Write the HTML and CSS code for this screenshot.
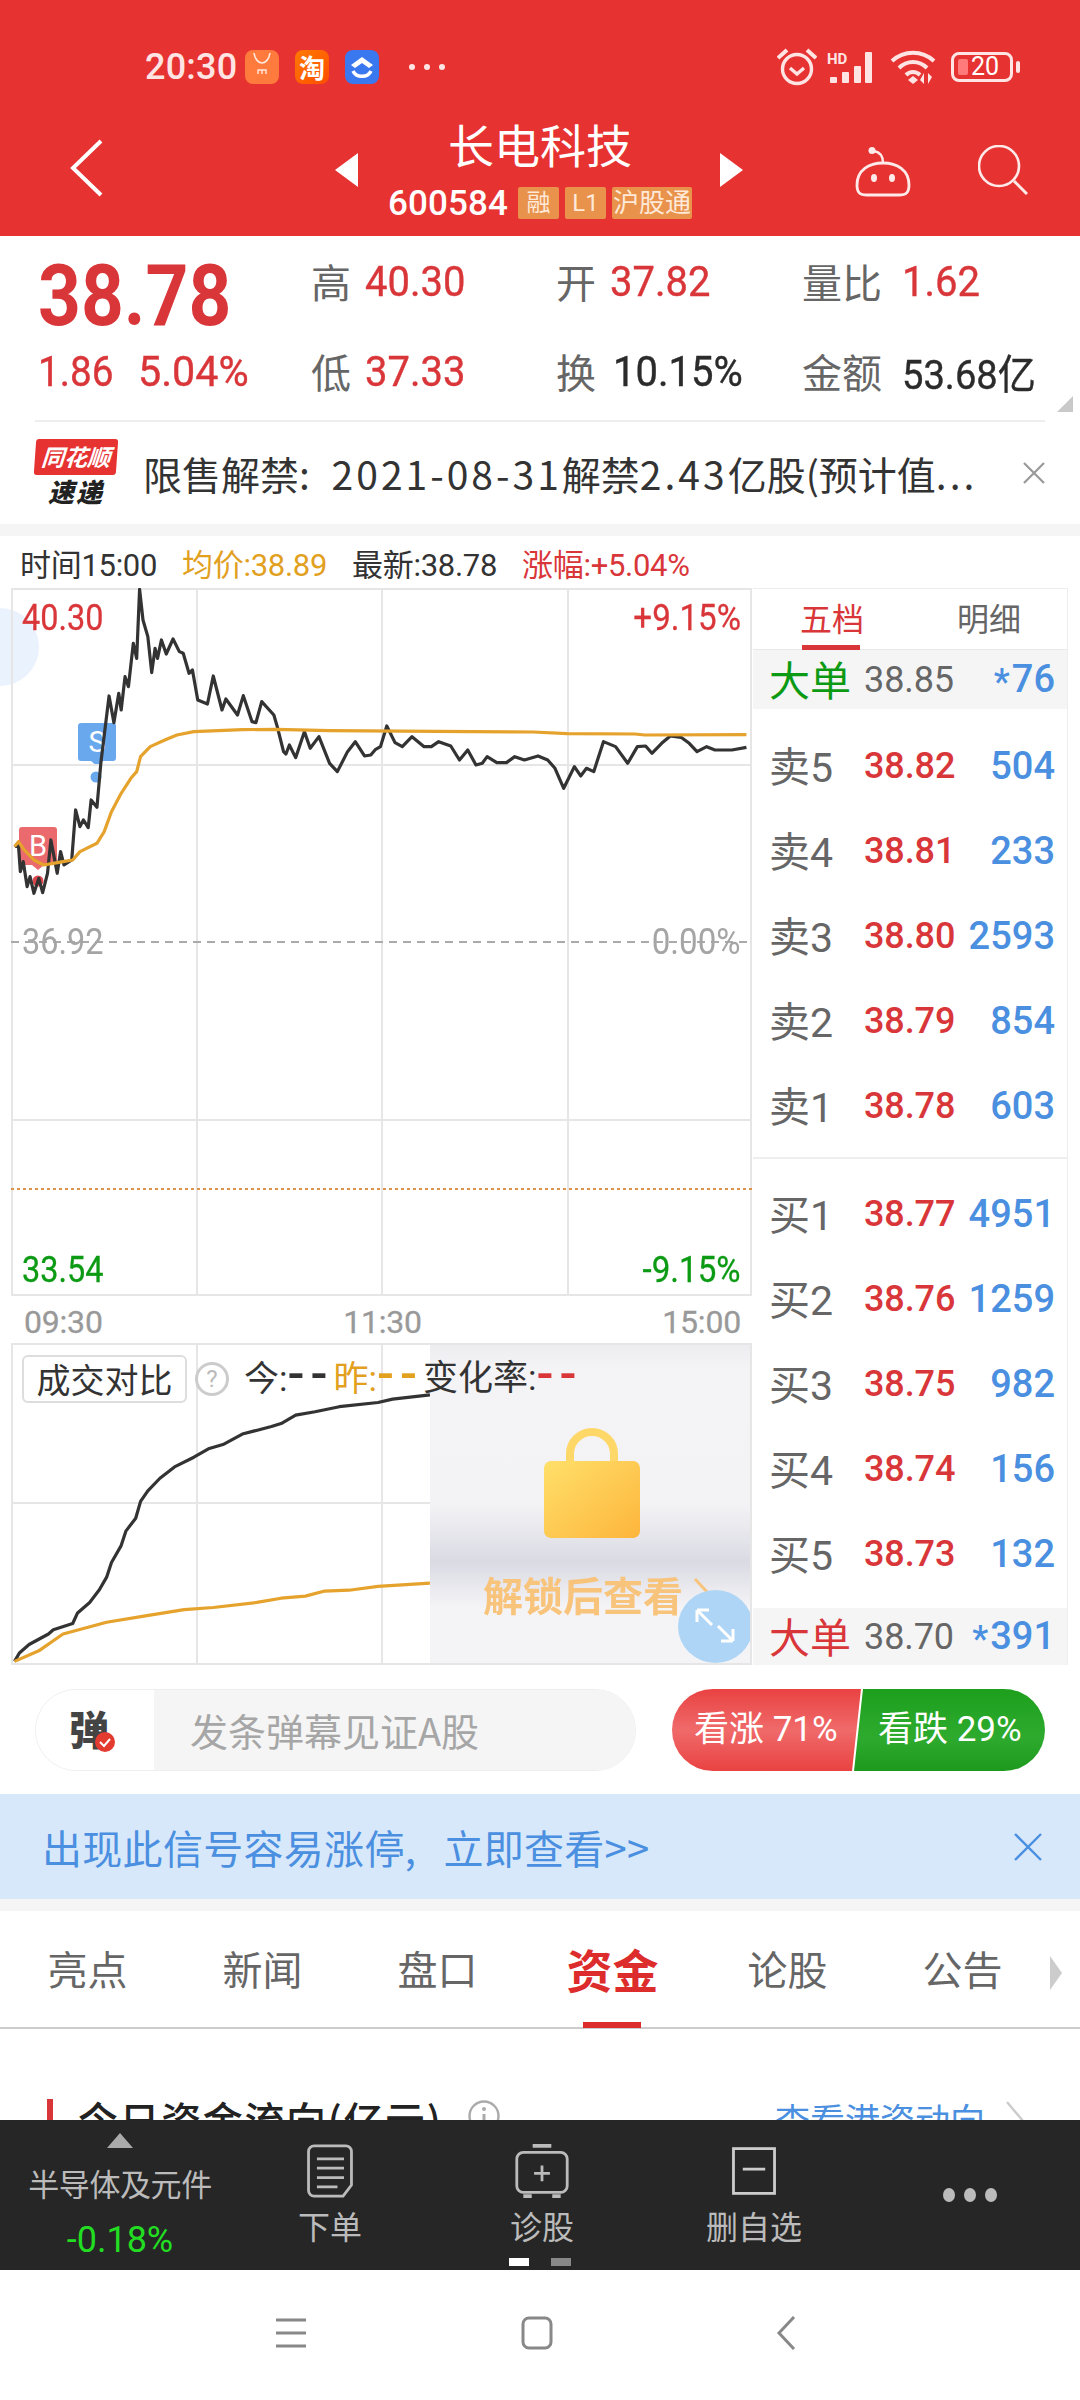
FILE: index.html
```html
<!DOCTYPE html>
<html lang="zh-CN">
<head>
<meta charset="utf-8">
<title>长电科技</title>
<link rel="stylesheet" href="styles.css">
</head>
<body>
<div class="page">
  <header class="hdr">
    <div class="status">
      <span class="time">20:30</span>
      <svg class="app" viewBox="0 0 34 34"><rect width="34" height="34" rx="8" fill="#ff7a3d"/><path d="M9 3c1 7 5 10 8 10s7-3 8-10" fill="none" stroke="#ffe9dc" stroke-width="1.6"/><path d="M13 24v-4h8v4M17 20v4" fill="none" stroke="#ffe9dc" stroke-width="1.4"/></svg>
      <span class="app taobao">淘</span>
      <svg class="app" viewBox="0 0 34 34"><rect width="34" height="34" rx="8" fill="#3a78f0"/><path d="M6 15 17 7l11 8-4 3-7-5-7 5z" fill="#fff"/><path d="M8 21c3 7 15 7 18 0" fill="none" stroke="#fff" stroke-width="3.4"/></svg>
      <span class="more"><i></i><i></i><i></i></span>
      <span class="status-right">
        <svg class="s-alarm" viewBox="0 0 40 38"><circle cx="20" cy="21" r="14.5" fill="none" stroke="#ffe4e4" stroke-width="3.4"/><path d="M13 20l7 6 7-6" fill="none" stroke="#ffe4e4" stroke-width="3.4"/><path d="M1 10 10 2M39 10l-9-8" stroke="#ffe4e4" stroke-width="4"/></svg>
        <span class="signal">
          <svg viewBox="0 0 50 32"><text x="0" y="13" class="hd">HD</text><g fill="#ffe4e4"><rect x="3" y="26" width="7" height="6" rx="1"/><rect x="15" y="21" width="7" height="11" rx="1"/><rect x="27" y="15" width="7" height="17" rx="1"/><rect x="38" y="1" width="7" height="31" rx="1"/></g></svg>
        </span>
        <svg class="s-wifi" viewBox="0 0 46 36"><g fill="none" stroke="#ffe4e4" stroke-width="4"><path d="M2 12c12-11 30-11 42 0"/><path d="M9 19c8-8 20-8 28 0"/><path d="M16 26c4-4 10-4 14 0"/></g><path d="M18 31l5-4 5 4-5 4z" fill="#ffe4e4"/><path d="M34 24v11l-4-4zM38 35V24l4 4z" fill="#ffe4e4"/></svg>
        <span class="battery"><i class="b-fill"></i><b>20</b></span><i class="b-tip"></i>
      </span>
    </div>
    <div class="titlebar">
      <svg class="back" viewBox="0 0 33 58"><path d="M31 2 3 29l28 27" fill="none" stroke="#fff" stroke-width="4"/></svg>
      <i class="tri tri-l"></i>
      <div class="stock">
        <div class="name">长电科技</div>
        <div class="code"><span class="code-num">600584</span><span class="tag">融</span><span class="tag">L1</span><span class="tag tag-wide">沪股通</span></div>
      </div>
      <i class="tri tri-r"></i>
      <svg class="robot" viewBox="0 0 56 50"><circle cx="17" cy="3.5" r="3.5" fill="#ffeaea"/><path d="M19 4c6 1 9 5 9 12" fill="none" stroke="#ffeaea" stroke-width="2.4"/><path d="M28 16c14 0 26 7 26 22 0 8-3 10-10 10H12C5 48 2 46 2 38c0-15 12-22 26-22z" fill="none" stroke="#ffeaea" stroke-width="2.8"/><ellipse cx="19" cy="31" rx="3" ry="4" fill="#ffeaea"/><ellipse cx="37" cy="31" rx="3" ry="4" fill="#ffeaea"/></svg>
      <svg class="search" viewBox="0 0 50 50"><circle cx="21" cy="21" r="20" fill="none" stroke="#ffeaea" stroke-width="2.6"/><path d="M36 36l13 13" stroke="#ffeaea" stroke-width="3"/></svg>
    </div>
  </header>

  <section class="quote">
    <div class="big">38.78</div>
    <div class="q"><span class="ql">高</span><span class="qv red">40.30</span></div>
    <div class="q"><span class="ql">开</span><span class="qv red">37.82</span></div>
    <div class="q q-wide"><span class="ql">量比</span><span class="qv red">1.62</span></div>
    <div class="chg red"><span class="chg-a">1.86</span><span class="chg-b">5.04%</span></div>
    <div class="q"><span class="ql">低</span><span class="qv red">37.33</span></div>
    <div class="q q-mid"><span class="ql">换</span><span class="qv dark">10.15%</span></div>
    <div class="q q-wide"><span class="ql">金额</span><span class="qv dark amount">53.68亿</span></div>
    <i class="corner"></i>
  </section>

  <section class="news">
    <div class="logo"><span class="logo-top">同花顺</span><span class="logo-bot">速递</span></div>
    <div class="news-text">限售解禁: <span class="news-num news-date">2021-08-31</span>解禁<span class="news-num">2.43</span>亿股(预计值<span class="news-num">...</span></div>
    <svg class="news-x" viewBox="0 0 22 22"><path d="M1 1l20 20M21 1 1 21" stroke="#999" stroke-width="2.2"/></svg>
  </section>
  <div class="band"></div>

  <section class="market">
    <div class="charts">
      <i class="bubble"></i>
      <div class="legend">
        <span class="dark">时间15:00</span><span class="gold">均价:38.89</span><span class="dark">最新:38.78</span><span class="red">涨幅:+5.04%</span>
      </div>
      <div class="plot plot-main">
        <div class="badge badge-s">S</div>
        <div class="badge badge-b">B</div>
        <svg class="plot-svg" viewBox="11 588 741 708">
          <g class="grid"><path d="M197 588V1296M382 588V1296M568 588V1296M11 765H752M11 1120H752"/></g>
          <path d="M11 942H752" class="dash"/>
          <path d="M11 1189H752" class="dot-line"/>
          <circle cx="96" cy="777" r="5.5" fill="#6aa8ee"/>
          <circle cx="38" cy="881" r="5.5" fill="#e0474c"/>
          <g transform="translate(0 530) scale(.4847 .3333)">
            <polyline class="ln-dark" points="30,950 38,945 42,1025 48,995 56,1070 62,1040 70,1090 80,1045 88,1088 98,1030 105,930 118,1030 125,965 132,1005 148,990 156,840 165,890 172,870 182,893 188,810 200,832 208,700 225,498 235,578 245,490 250,540 258,440 265,470 275,340 282,385 288,178 295,270 305,320 313,428 320,355 325,385 333,330 343,372 357,327 370,365 378,370 390,430 397,420 408,510 428,522 440,438 458,540 466,507 490,555 502,497 520,575 528,578 540,515 565,555 572,590 585,665 590,672 597,645 610,683 628,605 640,655 658,620 680,700 696,725 717,665 733,635 752,678 765,675 775,658 785,650 798,588 815,638 830,650 850,620 875,650 890,650 905,635 930,648 948,690 965,660 982,705 995,700 1005,680 1025,698 1045,698 1062,680 1082,690 1110,678 1130,690 1145,715 1163,775 1185,710 1198,738 1210,715 1225,725 1245,635 1270,650 1295,700 1315,650 1332,648 1345,670 1365,640 1383,618 1405,622 1422,640 1438,665 1458,650 1475,660 1510,660 1540,652"/>
            <polyline class="ln-gold" points="30,950 38,935 50,960 70,990 90,1005 110,1000 130,995 150,990 165,965 200,940 215,905 230,845 250,790 270,745 282,725 290,680 310,650 340,630 365,615 400,605 450,602 500,599 570,598 680,602 900,604 1100,606 1170,611 1310,612 1330,615 1540,614"/>
          </g>
        </svg>
        <span class="pl pl-tl red">40.30</span><span class="pl pl-tr red">+9.15%</span>
        <span class="pl pl-ml grey">36.92</span><span class="pl pl-mr grey">0.00%</span>
        <span class="pl pl-bl green">33.54</span><span class="pl pl-br green">-9.15%</span>
      </div>
      <div class="axis"><span>09:30</span><span>11:30</span><span>15:00</span></div>
      <div class="plot plot-vol">
        <svg class="plot-svg" viewBox="11 1343 741 322">
          <g class="grid"><path d="M197 1343V1665M382 1343V1665M568 1343V1665M11 1503H752"/></g>
          <g transform="translate(0 1030) scale(.4847 .4209)">
            <polyline class="ln-dark" points="30,1500 40,1480 60,1460 100,1435 110,1425 150,1410 160,1385 185,1360 205,1330 220,1300 230,1265 250,1225 260,1190 280,1160 290,1120 305,1095 330,1065 360,1038 400,1015 430,995 460,985 500,960 560,942 580,935 610,915 650,907 700,895 780,885 810,877 887,867"/>
            <polyline class="ln-gold" points="30,1500 80,1475 130,1435 220,1407 300,1392 380,1377 440,1372 530,1360 580,1350 630,1345 670,1333 720,1331 780,1322 887,1314"/>
          </g>
        </svg>
        <div class="lock">
          <svg class="lock-ic" viewBox="0 0 96 110"><defs><linearGradient id="lg" x1="0" y1="0" x2="1" y2="1"><stop offset="0" stop-color="#ffe06a"/><stop offset="1" stop-color="#fdb53c"/></linearGradient></defs><path d="M26 44V26a22 22 0 0 1 44 0v18" fill="none" stroke="#fdd768" stroke-width="8"/><rect y="33" width="96" height="77" rx="7" fill="url(#lg)"/></svg>
          <div class="lock-text">解锁后查看<svg class="lock-chev" viewBox="0 0 18 34"><path d="M2 2l14 15L2 32" fill="none" stroke="#f8c47c" stroke-width="3"/></svg></div>
        </div>
        <div class="vol-bar">
          <span class="vol-btn">成交对比</span>
          <span class="help">?</span>
          <span class="vol-txt"><span class="dark">今:<span class="dd">--</span></span><span class="gold">昨:<span class="dd">--</span></span><span class="dark">变化率:</span><span class="red"><span class="dd">--</span></span></span>
        </div>
        <svg class="expand" viewBox="0 0 75 75"><ellipse cx="37.5" cy="37.5" rx="37.5" ry="36.5" fill="#aed5f5"/><path d="M19 21h12M19 21v12M19 21l15 15M55 52H43M55 52V40M55 52 40 37" fill="none" stroke="#fff" stroke-width="3"/></svg>
      </div>
    </div>

    <aside class="book">
      <div class="book-tabs"><span class="bt on">五档</span><span class="bt">明细</span></div>
      <div class="big-row"><span class="lab lab-g">大单</span><span class="pr pr-g">38.85</span><span class="vol"><small>*</small>76</span></div>
      <div class="rows rows-sell">
        <div class="row"><span class="lab">卖5</span><span class="pr">38.82</span><span class="vol">504</span></div>
        <div class="row"><span class="lab">卖4</span><span class="pr">38.81</span><span class="vol">233</span></div>
        <div class="row"><span class="lab">卖3</span><span class="pr">38.80</span><span class="vol">2593</span></div>
        <div class="row"><span class="lab">卖2</span><span class="pr">38.79</span><span class="vol">854</span></div>
        <div class="row"><span class="lab">卖1</span><span class="pr">38.78</span><span class="vol">603</span></div>
      </div>
      <div class="rows rows-buy">
        <div class="row"><span class="lab">买1</span><span class="pr">38.77</span><span class="vol">4951</span></div>
        <div class="row"><span class="lab">买2</span><span class="pr">38.76</span><span class="vol">1259</span></div>
        <div class="row"><span class="lab">买3</span><span class="pr">38.75</span><span class="vol">982</span></div>
        <div class="row"><span class="lab">买4</span><span class="pr">38.74</span><span class="vol">156</span></div>
        <div class="row"><span class="lab">买5</span><span class="pr">38.73</span><span class="vol">132</span></div>
      </div>
      <div class="big-row big-row-b"><span class="lab lab-r">大单</span><span class="pr pr-g">38.70</span><span class="vol"><small>*</small>391</span></div>
    </aside>
  </section>

  <section class="social">
    <div class="danmu">
      <div class="danmu-ic"><b>弹</b><svg class="danmu-chk" viewBox="0 0 20 20"><circle cx="10" cy="10" r="10" fill="#e33b30"/><path d="M5 10l4 4 6-7" fill="none" stroke="#fff" stroke-width="2"/></svg></div>
      <div class="danmu-in">发条弹幕见证A股</div>
    </div>
    <div class="vote"><span class="up">看涨 71%</span><span class="down">看跌 29%</span></div>
  </section>

  <section class="signal-bar">
    <span class="signal-text">出现此信号容易涨停, 立即查看&gt;&gt;</span>
    <svg class="sig-x" viewBox="0 0 30 30"><path d="M2 2l26 26M28 2 2 28" stroke="#4a8fe0" stroke-width="2.4"/></svg>
  </section>
  <div class="band"></div>

  <nav class="tabs">
    <span class="tab">亮点</span><span class="tab">新闻</span><span class="tab">盘口</span><span class="tab on">资金</span><span class="tab">论股</span><span class="tab">公告</span>
    <i class="tab-more"></i>
  </nav>

  <section class="funds">
    <div class="funds-head">
      <i class="funds-bar"></i>
      <h2>今日资金流向(亿元)</h2>
      <svg class="info" viewBox="0 0 32 32"><circle cx="16" cy="16" r="14.5" fill="none" stroke="#aaa" stroke-width="2.4"/><circle cx="16" cy="9" r="2" fill="#aaa"/><path d="M16 14v11" stroke="#aaa" stroke-width="3"/></svg>
      <span class="funds-link">查看港资动向</span>
      <svg class="funds-chev" viewBox="0 0 20 42"><path d="M2 2l16 19L2 40" fill="none" stroke="#ccc" stroke-width="2.4"/></svg>
    </div>
  </section>

  <footer class="dock">
    <div class="d-sector"><i class="d-up"></i><span class="d-name">半导体及元件</span><span class="d-chg">-0.18%</span></div>
    <div class="d-item"><svg class="d-ic" viewBox="0 0 52 60"><path d="M9 3h34a6 6 0 0 1 6 6v36L40 57H9a6 6 0 0 1-6-6V9a6 6 0 0 1 6-6z" fill="none" stroke="#bbb" stroke-width="3"/><path d="M12 17h29M12 27h29M12 37h29M12 47h22" stroke="#bbb" stroke-width="3"/></svg><span>下单</span></div>
    <div class="d-item"><svg class="d-ic" viewBox="0 0 60 60"><rect x="3" y="10" width="54" height="43" rx="7" fill="none" stroke="#bbb" stroke-width="3"/><path d="M20 3h20M10 57h9M41 57h9" stroke="#bbb" stroke-width="4"/><path d="M30 24v17M21.500 32.500h17" stroke="#bbb" stroke-width="3"/></svg><span>诊股</span></div>
    <div class="d-item"><svg class="d-ic" viewBox="0 0 50 60"><rect x="3" y="6" width="44" height="48" fill="none" stroke="#ccc" stroke-width="3"/><path d="M13 28h24" stroke="#ccc" stroke-width="3"/></svg><span>删自选</span></div>
    <div class="d-more"><i></i><i></i><i></i></div>
    <div class="pager"><i class="on"></i><i></i></div>
  </footer>

  <div class="navbar">
    <svg class="nav-menu" viewBox="0 0 30 30"><path d="M0 2h30M0 15h30M0 28h30" stroke="#888" stroke-width="3"/></svg>
    <svg class="nav-home" viewBox="0 0 32 34"><rect x="2" y="2" width="28" height="30" rx="6" fill="none" stroke="#888" stroke-width="3"/></svg>
    <svg class="nav-back" viewBox="0 0 20 34"><path d="M18 1 3 17l15 16" fill="none" stroke="#888" stroke-width="3"/></svg>
  </div>
</div>
</body>
</html>
```
FILE: styles.css
```css
* { box-sizing: border-box; }
html, body { margin: 0; padding: 0; background: #fff; }
body { font-family: Roboto, "Noto Sans CJK SC", sans-serif; }
.page { position: relative; width: 1080px; height: 2400px; overflow: hidden; display: flex; flex-direction: column; }
i { display: block; font-style: normal; }
.red { color: #d9363a; }
.dark { color: #333; }
.gold { color: #e2a01f; }
.grey { color: #a5a5a5; }
.green { color: #0c9a14; }

/* header */
.hdr { height: 236px; background: #e73232; color: #fff; flex: none; }
.status { height: 86px; padding: 48px 0 0 145px; display: flex; align-items: center; color: #ffe4e4; }
.time { font-size: 36px; font-weight: 500; width: 100px; letter-spacing: .2px; }
.app { width: 34px; height: 34px; margin-right: 16px; flex: none; }
.taobao { background: linear-gradient(135deg, #ff7a00, #ff4d00); border-radius: 8px; color: #fff; font: 700 26px/34px "Noto Sans CJK SC", sans-serif; text-align: center; display: block; }
.more { margin-left: 14px; display: flex; gap: 9px; }
.more i { width: 6px; height: 6px; border-radius: 50%; background: #ffe4e4; }
.status-right { margin-left: auto; display: flex; align-items: center; height: 38px; }
.s-alarm { width: 40px; height: 38px; margin-right: 10px; }
.signal { display: flex; width: 50px; height: 32px; margin-right: 13px; }
.signal svg { width: 50px; height: 32px; }
.hd { font: 700 15px Roboto, sans-serif; fill: #ffe4e4; }
.s-wifi { width: 46px; height: 36px; margin-right: 15px; }
.battery { position: relative; width: 62px; height: 30px; border: 3px solid #ffe4e4; border-radius: 8px; display: flex; align-items: center; padding-left: 17px; }
.battery b { font-size: 25px; font-weight: 400; line-height: 24px; color: #fff; }
.b-fill { position: absolute; left: 4px; top: 4px; width: 10px; height: 16px; background: #ff7a7a; border-radius: 2px; }
.b-tip { width: 4px; height: 12px; background: #ffe4e4; border-radius: 2px; margin: 0 60px 0 3px; }

.titlebar { position: relative; height: 150px; }
.back { position: absolute; left: 70px; top: 53px; width: 33px; height: 58px; }
.tri { position: absolute; top: 67px; width: 0; height: 0; border-top: 17px solid transparent; border-bottom: 17px solid transparent; }
.tri-l { left: 335px; border-right: 23px solid #fff; }
.tri-r { left: 720px; border-left: 23px solid #fff; }
.stock { position: absolute; left: 388px; top: 27px; width: 304px; display: flex; flex-direction: column; align-items: center; }
.name { font: 400 46px/60px "Noto Sans CJK SC", sans-serif; color: #fff; }
.code { display: flex; align-items: center; width: 304px; height: 34px; margin-top: 13px; }
.code-num { font-size: 35px; font-weight: 500; width: 131px; letter-spacing: .1px; }
.tag { background: #e8924c; color: #ffe9d8; height: 32px; width: 41px; margin-right: 6px; border-radius: 2px; text-align: center; font: 400 24px/32px Roboto, "Noto Sans CJK SC", sans-serif; flex: none; }
.tag-wide { width: 80px; margin-right: 0; overflow: hidden; white-space: nowrap; font-size: 26px; }
.robot { position: absolute; left: 855px; top: 61px; width: 56px; height: 50px; }
.search { position: absolute; left: 978px; top: 59px; width: 50px; height: 50px; }

/* quote */
.quote { position: relative; flex: none; height: 184px; padding-left: 38px; display: grid; grid-template-columns: 273px 245px 246px 1fr; grid-template-rows: 90px 90px; }
.big { font-size: 86px; font-weight: 700; color: #d9363a; line-height: 60px; align-self: end; transform: scaleX(.87); transform-origin: left center; }
.q { display: flex; align-items: center; gap: 14px; }
.q-mid { gap: 17px; }
.q-wide { gap: 20px; }
.ql { font: 400 40px "Noto Sans CJK SC", sans-serif; color: #666; }
.qv { font-size: 43px; font-weight: 400; transform: scaleX(.93); transform-origin: left center; white-space: nowrap; -webkit-text-stroke: .4px currentColor; }
.qv.dark { color: #2b2b2b; }
.amount { font-size: 41px; }
.chg { display: flex; align-items: center; font-size: 43px; white-space: nowrap; -webkit-text-stroke: .4px currentColor; }
.chg-a { width: 100px; flex: none; transform: scaleX(.9); transform-origin: left center; }
.chg-b { transform: scaleX(.96); transform-origin: left center; }
.corner { position: absolute; right: 7px; bottom: 8px; width: 0; height: 0; border-left: 16px solid transparent; border-bottom: 16px solid #c9c9c9; }

/* news */
.news { position: relative; flex: none; height: 104px; margin: 0 35px; border-top: 2px solid #eee; display: flex; align-items: center; }
.logo { width: 82px; height: 68px; margin-right: 26px; display: flex; flex-direction: column; align-items: center; flex: none; }
.logo-top { width: 82px; height: 36px; background: #e73232; color: #fff; font: italic 700 23px/34px "Noto Sans CJK SC", sans-serif; text-align: center; transform: skewX(-4deg); border-radius: 3px; }
.logo-bot { font: italic 900 26px/32px "Noto Sans CJK SC", sans-serif; color: #222; letter-spacing: 2px; }
.news-text { font: 400 39px "Noto Sans CJK SC", sans-serif; color: #333; white-space: nowrap; flex: 1; }
.news-num { letter-spacing: 3px; }
.news-date { margin-left: 13px; }
.news-x { width: 22px; height: 22px; flex: none; }
.band { height: 12px; background: #f5f5f5; flex: none; }

/* market */
.market { flex: none; height: 1129px; display: flex; }
.charts { position: relative; width: 753px; flex: none; }
.bubble { position: absolute; left: -39px; top: 72px; width: 78px; height: 78px; border-radius: 50%; background: #eaf2fd; }
.legend { height: 52px; padding-left: 20px; display: flex; align-items: center; gap: 25px; font: 400 31px "Roboto", "Noto Sans CJK SC", sans-serif; white-space: nowrap; position: relative; letter-spacing: -.3px; }
.plot { position: relative; margin-left: 11px; width: 741px; border: 2px solid #e6e6e6; }
.plot-main { height: 708px; }
.plot-vol { height: 322px; overflow: hidden; }
.plot-svg { position: absolute; left: -2px; top: -2px; width: 741px; }
.plot-main .plot-svg { height: 708px; }
.plot-vol .plot-svg { height: 322px; }
.grid path { fill: none; stroke: #e6e6e6; stroke-width: 2; }
.dash { stroke: #aaa; stroke-width: 2; stroke-dasharray: 8 6; fill: none; }
.dot-line { stroke: #e0914a; stroke-width: 2; stroke-dasharray: 3 3; fill: none; }
.ln-dark, .ln-gold { fill: none; stroke-linejoin: round; vector-effect: non-scaling-stroke; }
.ln-dark { stroke: #333; stroke-width: 3.2; }
.ln-gold { stroke: #e5a22c; stroke-width: 3.2; }
.badge { position: absolute; width: 38px; height: 38px; border-radius: 3px; color: #fff; font-size: 29px; line-height: 38px; text-align: center; }
.badge::after { content: ""; position: absolute; left: 13px; top: 38px; border-left: 6px solid transparent; border-right: 6px solid transparent; border-top: 5px solid currentColor; }
.badge-s { left: 65px; top: 133px; background: #6aa8ee; }
.badge-s::after { border-top-color: #6aa8ee; }
.badge-b { left: 6px; top: 237px; background: #ea6a6e; }
.badge-b::after { border-top-color: #ea6a6e; }
.pl { position: absolute; font-size: 36px; line-height: 40px; white-space: nowrap; -webkit-text-stroke: .3px currentColor; }
.pl-tl, .pl-ml, .pl-bl { left: 9px; transform: scaleX(.9); transform-origin: left center; }
.pl-tr, .pl-mr, .pl-br { right: 9px; transform: scaleX(.92); transform-origin: right center; }
.pl-tl, .pl-tr { top: 8px; }
.pl-ml, .pl-mr { top: 332px; -webkit-text-stroke: 0; }
.pl-bl, .pl-br { bottom: 4px; }
.axis { height: 47px; margin-left: 24px; width: 717px; padding-top: 4px; display: flex; justify-content: space-between; align-items: center; font-size: 32px; color: #999; letter-spacing: -.2px; -webkit-text-stroke: .3px #999; }
.lock { position: absolute; left: 417px; top: -2px; width: 324px; height: 322px; background: linear-gradient(180deg, #ececf0 0, #f4f4f7 8%, #f3f3f6 50%, #dadae3 68%, #f4f4f7 82%, #f4f4f7 100%); display: flex; flex-direction: column; align-items: center; }
.lock-ic { width: 96px; height: 110px; margin-top: 85px; }
.lock-text { margin-top: 29px; display: flex; align-items: center; font: 700 40px/54px "Noto Sans CJK SC", sans-serif; color: #f8c47c; white-space: nowrap; padding-left: 10px; filter: blur(.7px); }
.lock-chev { width: 18px; height: 34px; margin-left: 10px; }
.vol-bar { position: absolute; left: 9px; top: 9px; display: flex; align-items: center; height: 50px; white-space: nowrap; }
.vol-btn { width: 165px; height: 48px; border: 2px solid #ddd; border-radius: 6px; background: #fff; color: #333; font: 400 34px/44px "Noto Sans CJK SC", sans-serif; text-align: center; }
.help { width: 34px; height: 34px; margin-left: 8px; border: 3px solid #ccc; border-radius: 50%; color: #bbb; font-size: 24px; line-height: 28px; text-align: center; }
.vol-txt { margin-left: 15px; font: 400 35px "Roboto", "Noto Sans CJK SC", sans-serif; display: flex; align-items: center; }
.vol-txt > span { line-height: 44px; }
.dd { font-size: 50px; line-height: 34px; letter-spacing: 6px; font-weight: 500; }
.expand { position: absolute; left: 665px; top: 244px; width: 75px; height: 75px; }

/* order book */
.book { width: 315px; flex: none; margin-top: 52px; border-top: 1px solid #ececec; border-right: 1px solid #eee; }
.book-tabs { height: 61px; display: grid; grid-template-columns: 158px 1fr; border-bottom: 1px solid #e8e8e8; }
.bt { font: 400 32px/56px "Noto Sans CJK SC", sans-serif; color: #666; text-align: center; position: relative; }
.bt.on { color: #d9363a; }
.bt.on::after { content: ""; position: absolute; left: 49px; top: 56px; width: 58px; height: 5px; background: #d9363a; }
.big-row { height: 59px; background: #f5f5f5; display: flex; align-items: center; padding: 0 12px 0 16px; }
.big-row-b { height: 57px; margin-top: 12px; }
.rows-sell { margin-top: 14px; padding-bottom: 9px; border-bottom: 2px solid #eee; }
.rows-buy { margin-top: 12px; }
.row { height: 85px; display: flex; align-items: center; padding: 0 12px 0 16px; }
.lab { width: 95px; flex: none; font: 400 41px "Roboto", "Noto Sans CJK SC", sans-serif; color: #666; position: relative; top: -2px; }
.lab-g { color: #0c9a14; }
.lab-r { color: #d9363a; }
.pr { width: 90px; flex: none; font-size: 36px; font-weight: 500; color: #d9363a; letter-spacing: -.1px; white-space: nowrap; }
.pr-g { color: #666; font-weight: 400; }
.vol { flex: 1; text-align: right; font-size: 38px; color: #4a8fe0; font-weight: 500; white-space: nowrap; }
.vol small { font-size: 36px; vertical-align: -2px; margin-right: 2px; }

/* social */
.social { flex: none; height: 129px; padding: 24px 35px 0; display: flex; justify-content: space-between; }
.danmu { width: 601px; height: 82px; border: 1px solid #eee; border-radius: 41px; display: flex; overflow: hidden; }
.danmu-ic { position: relative; width: 118px; background: #fff; flex: none; font: 700 40px/76px "Noto Sans CJK SC", sans-serif; color: #444; padding-left: 33px; }
.danmu-chk { position: absolute; left: 59px; top: 42px; width: 20px; height: 20px; }
.danmu-in { flex: 1; background: #f5f5f5; font: 400 38px/80px "Noto Sans CJK SC", sans-serif; color: #a6a6a6; padding-left: 36px; }
.vote { width: 373px; height: 82px; border-radius: 41px; overflow: hidden; display: flex; color: #fff; font: 400 35px/82px Roboto, "Noto Sans CJK SC", sans-serif; white-space: nowrap; background: #fff; }
.up { width: 190px; flex: none; padding-left: 22px; background: linear-gradient(180deg, #e94242 0, #f06a6a 50%, #e94242 100%); clip-path: polygon(0 0, 189px 0, 180px 100%, 0 100%); }
.down { width: 193px; flex: none; margin-left: -10px; padding-left: 26px; background: linear-gradient(180deg, #1d9f1d, #2eab2e 60%, #1d9a1d); clip-path: polygon(11px 0, 100% 0, 100% 100%, 2px 100%); }
.signal-bar { flex: none; height: 105px; background: #d8e8fb; display: flex; align-items: center; justify-content: space-between; padding: 0 37px 0 42px; font: 400 40px "Noto Sans CJK SC", sans-serif; color: #4a8fe0; white-space: nowrap; }
.signal-text { word-spacing: 18px; letter-spacing: .3px; }
.sig-x { width: 30px; height: 30px; }

/* tabs */
.tabs { position: relative; flex: none; height: 118px; border-bottom: 2px solid #ccc; display: grid; grid-template-columns: repeat(6, 175px); align-items: center; }
.tab { font: 400 40px/60px "Noto Sans CJK SC", sans-serif; color: #666; text-align: center; position: relative; top: -1px; }
.tab.on { font-size: 46px; font-weight: 700; color: #dd2c2c; }
.tab.on::after { content: ""; position: absolute; left: 58px; top: 84px; width: 58px; height: 6px; background: #dd2c2c; }
.tab-more { position: absolute; left: 1050px; top: 45px; width: 0; height: 0; border-top: 17px solid transparent; border-bottom: 17px solid transparent; border-left: 12px solid #ccc; }

/* funds */
.funds { flex: none; height: 91px; overflow: hidden; padding: 70px 55px 0 47px; }
.funds-head { display: flex; align-items: center; height: 32px; }
.funds-bar { width: 6px; height: 40px; background: #d9363a; margin-right: 25px; margin-top: 8px; flex: none; }
.funds-head h2 { margin: 8px 0 0; font: 500 40px/44px "Noto Sans CJK SC", sans-serif; color: #222; white-space: nowrap; letter-spacing: 1.6px; }
.info { width: 32px; height: 32px; margin: 2px 0 0 26px; flex: none; }
.funds-link { margin: 8px 0 0 auto; font: 400 35px/44px "Noto Sans CJK SC", sans-serif; color: #4a8fe0; white-space: nowrap; }
.funds-chev { width: 20px; height: 42px; margin: 12px 0 0 20px; flex: none; }

/* dock */
.dock { position: relative; flex: none; height: 150px; background: #262626; display: grid; grid-template-columns: 224px repeat(3, 212px) 1fr; color: #bbb; }
.d-sector { display: flex; flex-direction: column; align-items: center; padding-left: 16px; }
.d-up { width: 0; height: 0; margin-top: 13px; border-left: 13px solid transparent; border-right: 13px solid transparent; border-bottom: 15px solid #aaa; }
.d-name { font: 400 31px/40px "Noto Sans CJK SC", sans-serif; margin-top: 15px; white-space: nowrap; letter-spacing: -.4px; }
.d-chg { font-size: 36px; line-height: 40px; color: #22dd22; margin-top: 17px; }
.d-item { display: flex; flex-direction: column; align-items: center; font: 400 32px/44px "Noto Sans CJK SC", sans-serif; padding-top: 23px; }
.d-ic { width: 56px; height: 56px; margin-bottom: 4px; }
.d-more { display: flex; gap: 9px; justify-content: center; align-items: center; height: 150px; }
.d-more i { width: 12px; height: 14px; border-radius: 50%; background: #bbb; }
.pager { position: absolute; left: 509px; top: 138px; display: flex; gap: 22px; }
.pager i { width: 20px; height: 8px; background: #888; }
.pager i.on { background: #fff; }

/* navigation */
.navbar { position: relative; flex: 1; background: #fff; }
.nav-menu { position: absolute; left: 276px; top: 48px; width: 30px; height: 30px; }
.nav-home { position: absolute; left: 521px; top: 46px; width: 32px; height: 34px; }
.nav-back { position: absolute; left: 776px; top: 46px; width: 20px; height: 34px; }
```
